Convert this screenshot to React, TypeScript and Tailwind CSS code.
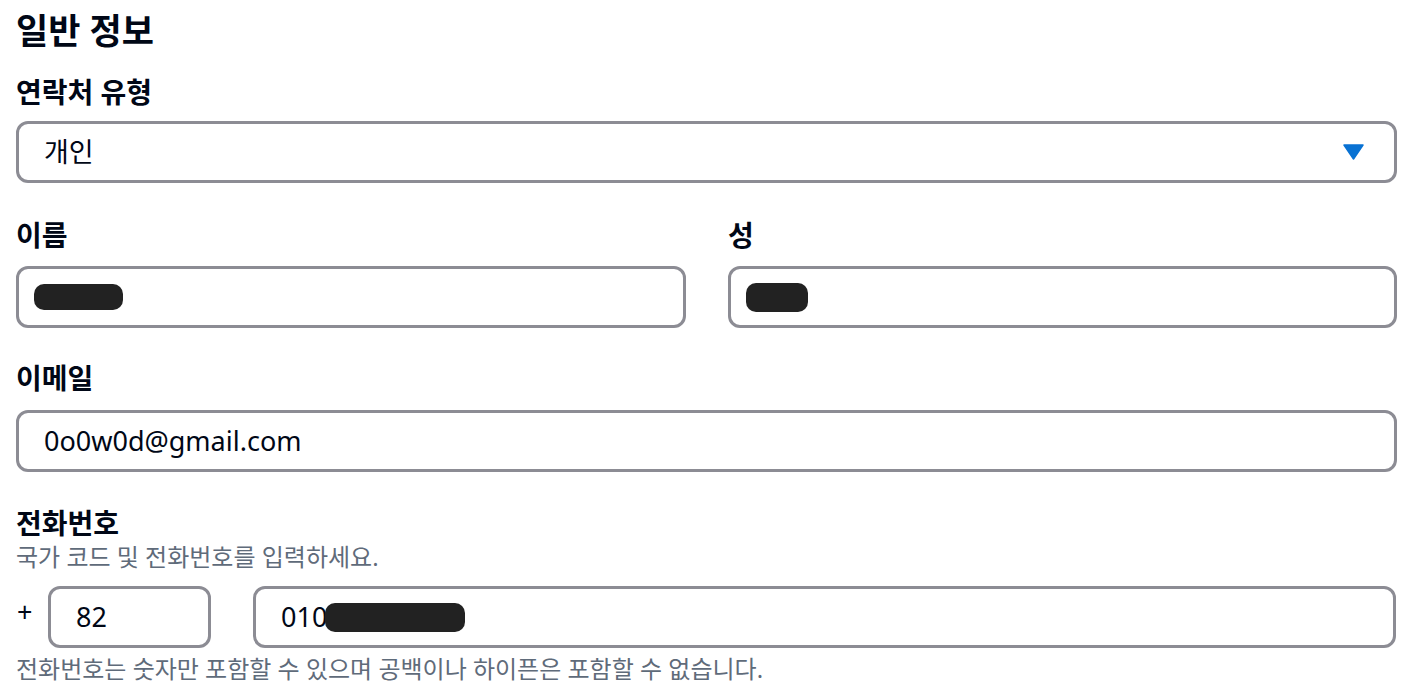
import React from "react";

const font = { fontFamily: '"Noto Sans", "Noto Sans CJK KR", sans-serif' };

function Blob({ w, h }: { w: number; h: number }) {
  return <span className="inline-block rounded-[10px] bg-[#222222] align-middle" style={{ width: w, height: h }} />;
}

export default function App() {
  return (
    <div className="min-h-[695px] w-[1418px] bg-white px-4 pt-[4px] text-[#000716]" style={font}>
      <h1 className="text-[35px] font-bold leading-[54px]">일반 정보</h1>

      <div className="mt-[16px] text-[28px] font-bold leading-[36px]">연락처 유형</div>
      <div className="mt-[11px] flex h-[62px] w-[1381px] items-center justify-between rounded-[12px] border-[3px] border-[#8c8c94] pl-[25px] pr-[30px]">
        <span className="text-[27px] leading-[34px]">개인</span>
        <svg width="21" height="16" viewBox="0 0 21 16">
          <path d="M1 1 L20 1 L10.5 15 Z" fill="#0972d3" stroke="#0972d3" strokeWidth="1.5" strokeLinejoin="round" />
        </svg>
      </div>

      <div className="mt-[34px] flex gap-[42px]">
        <div className="w-[670px]">
          <div className="text-[28px] font-bold leading-[36px]">이름</div>
          <div className="mt-[13px] flex h-[62px] items-center rounded-[12px] border-[3px] border-[#8c8c94] pl-[15px]">
            <Blob w={89} h={26} />
          </div>
        </div>
        <div className="w-[669px]">
          <div className="text-[28px] font-bold leading-[36px]">성</div>
          <div className="mt-[13px] flex h-[62px] items-center rounded-[12px] border-[3px] border-[#8c8c94] pl-[15px]">
            <Blob w={62} h={29} />
          </div>
        </div>
      </div>

      <div className="mt-[32px] text-[28px] font-bold leading-[36px]">이메일</div>
      <div className="mt-[14px] flex h-[62px] w-[1381px] items-center rounded-[12px] border-[3px] border-[#8c8c94] pl-[25px]">
        <span className="text-[27px] leading-[34px]">0o0w0d@gmail.com</span>
      </div>

      <div className="mt-[33px] text-[28px] font-bold leading-[36px]">전화번호</div>
      <div className="mt-[1px] text-[24px] leading-[30px] text-[#5f6b7a]">국가 코드 및 전화번호를 입력하세요.</div>
      <div className="mt-[14px] flex items-center">
        <span className="-mt-[10px] w-[32px] pl-[1px] text-[27px] leading-[34px]">+</span>
        <div className="flex h-[62px] w-[163px] items-center rounded-[12px] border-[3px] border-[#8c8c94] pl-[25px]">
          <span className="text-[27px] leading-[34px]">82</span>
        </div>
        <div className="ml-[42px] flex h-[62px] w-[1143px] items-center rounded-[12px] border-[3px] border-[#8c8c94] pl-[25px]">
          <span className="text-[27px] leading-[34px]">010</span>
          <span className="-ml-[2px]"><Blob w={140} h={29} /></span>
        </div>
      </div>
      <div className="mt-[6px] text-[24px] leading-[30px] text-[#5f6b7a]">
        전화번호는 숫자만 포함할 수 있으며 공백이나 하이픈은 포함할 수 없습니다.
      </div>
    </div>
  );
}
